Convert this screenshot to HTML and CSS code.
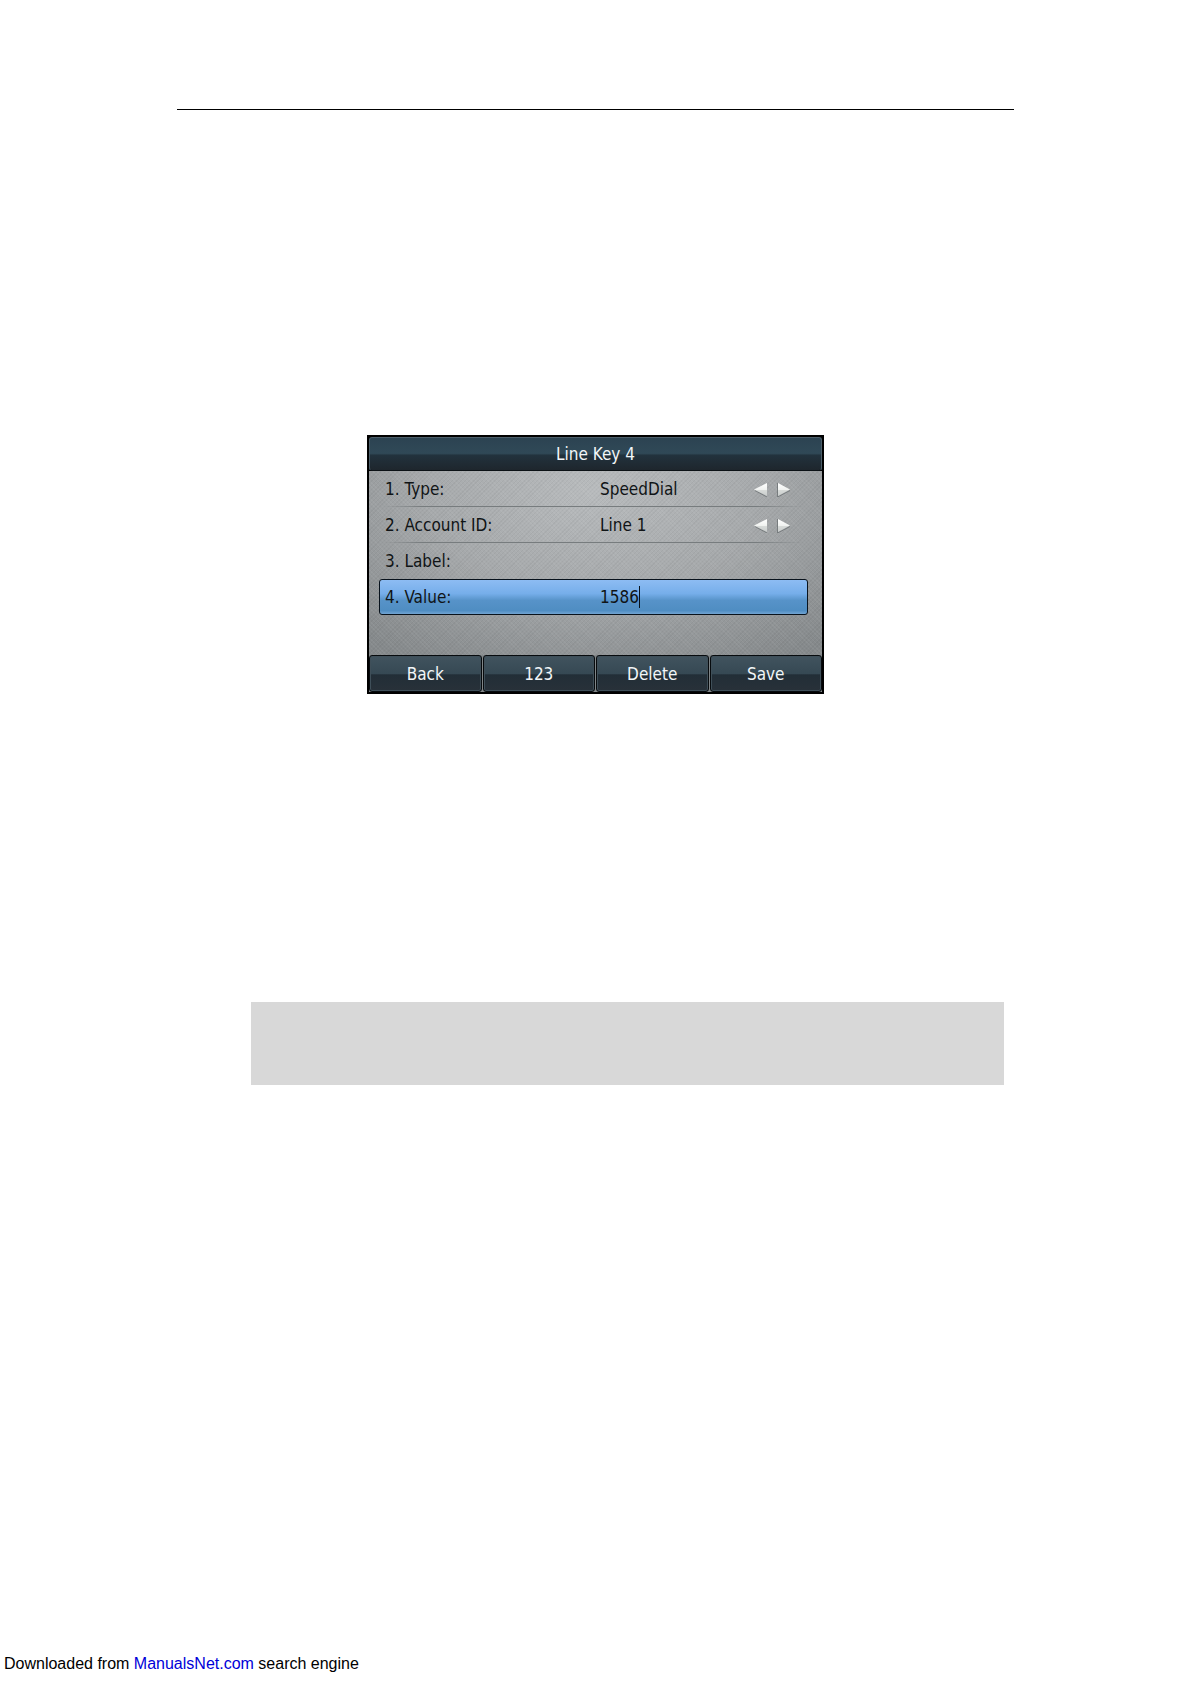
FILE: index.html
```html
<!DOCTYPE html>
<html lang="en">
<head>
  <meta charset="UTF-8">
  <meta name="viewport" content="width=device-width, initial-scale=1.0">
  <title>Line Key 4</title>
  <link rel="stylesheet" href="styles.css">
</head>
<body>
  <svg class="defs" aria-hidden="true">
    <defs>
      <linearGradient id="arrow-fill" x1="0" y1="0" x2="0" y2="1">
        <stop offset="0" stop-color="#ffffff"/>
        <stop offset="0.5" stop-color="#f0f2f0"/>
        <stop offset="0.55" stop-color="#d8dbd9"/>
        <stop offset="1" stop-color="#c8cccb"/>
      </linearGradient>
      <symbol id="arrow-left" viewBox="0 0 14 15">
        <path d="M1 8.500 13 15" stroke="#777c7e" fill="none"/>
        <path d="M0 7.500 13 1v13z" fill="url(#arrow-fill)"/>
      </symbol>
      <symbol id="arrow-right" viewBox="0 0 14 15">
        <path d="M.5 1v14L13 8.500" stroke="#777c7e" fill="none"/>
        <path d="M1 1v13l12-6.500z" fill="url(#arrow-fill)"/>
      </symbol>
    </defs>
  </svg>

  <main class="page">
    <hr class="rule">

    <form class="phone">
      <h1 class="title">Line Key 4</h1>
      <div class="fields">
        <div class="row">
          <label for="type">1. Type:</label>
          <select id="type"><option>SpeedDial</option></select>
          <div class="arrows">
            <button type="button" aria-label="Previous type"><svg><use href="#arrow-left"/></svg></button>
            <button type="button" aria-label="Next type"><svg><use href="#arrow-right"/></svg></button>
          </div>
        </div>
        <div class="row">
          <label for="account">2. Account ID:</label>
          <select id="account"><option>Line 1</option></select>
          <div class="arrows">
            <button type="button" aria-label="Previous account"><svg><use href="#arrow-left"/></svg></button>
            <button type="button" aria-label="Next account"><svg><use href="#arrow-right"/></svg></button>
          </div>
        </div>
        <div class="row">
          <label for="label">3. Label:</label>
          <input type="text" id="label">
        </div>
        <div class="row selected">
          <label for="value">4. Value:</label>
          <input type="text" id="value" class="editing" value="1586">
        </div>
      </div>
      <div class="softkeys">
        <button type="button">Back</button>
        <button type="button">123</button>
        <button type="button">Delete</button>
        <button type="button">Save</button>
      </div>
    </form>

    <div class="note"></div>
  </main>

  <footer class="footer">Downloaded from <a href="#">ManualsNet.com</a> search engine</footer>
</body>
</html>
```

FILE: styles.css
```css
* { box-sizing: border-box; }
body {
  margin: 0;
  min-height: 100vh;
  display: flex; flex-direction: column;
  background: #fff;
  font-family: "Liberation Sans", Arial, sans-serif;
}
.defs { position: absolute; width: 0; height: 0; }
.page {
  width: 90%;
  max-width: 837px;
  margin: 0 auto;
  padding-top: 109px;
}
.rule { margin: 0; border: 0; border-top: 1px solid #000; }

/* phone screen */
.phone {
  max-width: 457px;
  margin: 325px auto 0;
  padding: 1px;
  border: 1px solid #000;
  background: #000;
  font-family: "DejaVu Sans Condensed", Tahoma, sans-serif;
  font-size: 17px;
}
.title {
  margin: 0;
  height: 34px;
  border: 1px solid #4c5e69;
  border-bottom-color: #0b1115;
  border-radius: 3px;
  background: linear-gradient(#2c4352, #304957 48%, #22323d 54%, #1e262d);
  color: #f2f6f8;
  font-size: 17px; font-weight: normal;
  line-height: 32px;
  text-align: center;
}
.fields {
  padding: 0 14px 40px 10px;
  background:
    repeating-linear-gradient(45deg, rgba(255,255,255,0.05) 0 1px, transparent 1px 3px),
    repeating-linear-gradient(-45deg, rgba(0,0,0,0.04) 0 1px, transparent 1px 3px),
    radial-gradient(ellipse 75% 110% at 50% 10%, #b8bbbd, #a6a9ab 50%, #85898b);
}
.row {
  display: grid;
  grid-template-columns: 215px 1fr auto;
  align-items: center;
  height: 36px;
  padding: 0 17px 0 6px;
  color: #101416;
  background: linear-gradient(to right, transparent 1%, #777c7e 10% 88%, transparent 99%) bottom / 100% 1px no-repeat;
}
.row:nth-child(n+3) { background: none; }
.row.selected {
  padding-left: 5px;
  border: 1px solid #08121c;
  border-radius: 3px;
  background: linear-gradient(#8dbcf3, #76aeea 40%, #5793c9 60%, #4f8dc2 90%, #71a4d3);
}
select, input {
  appearance: none;
  justify-self: start;
  margin: 0; padding: 0;
  border: 0;
  background: none;
  color: inherit;
  font: inherit;
}
.editing {
  field-sizing: content;
  height: 22px;
  border-right: 1px solid #08121c;
}
.arrows { display: flex; gap: 9px; }
.arrows button { padding: 0; border: 0; background: none; }
.arrows svg { display: block; width: 14px; height: 15px; }

.softkeys {
  display: grid;
  grid-template-columns: repeat(4, 1fr);
  gap: 1px;
  background: #818688;
}
.softkeys button {
  height: 37px;
  padding: 0;
  border: 1px solid #070b0e;
  border-radius: 3px;
  background: linear-gradient(#41535e, #364954 50%, #222e37 54%, #283139);
  box-shadow: inset 0 0 0 1px #3f4f59;
  color: #f2f6f8;
  font: inherit;
}

.note {
  height: 83px;
  margin: 308px 10px 0 74px;
  background: #d8d8d8;
}
.footer {
  margin-top: auto;
  padding: 0 4px 11px;
  font-size: 16px;
  line-height: 18px;
}
.footer a { color: #0000d8; text-decoration: none; }
```
